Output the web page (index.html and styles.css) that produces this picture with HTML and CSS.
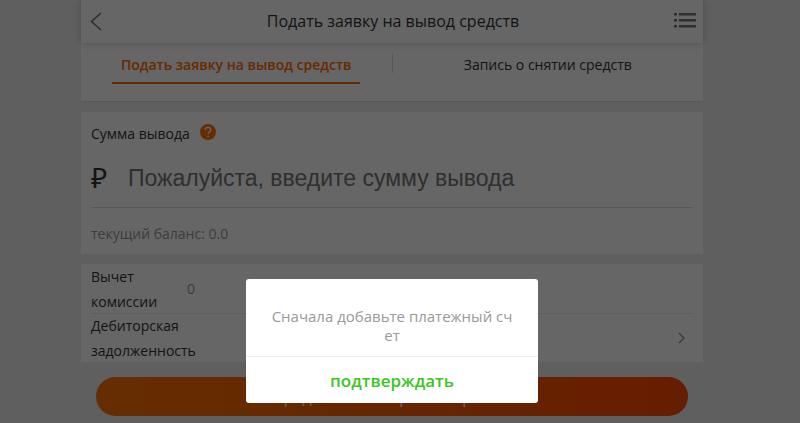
FILE: index.html
```html
<!DOCTYPE html>
<html lang="ru">

<head>
    <meta charset="UTF-8">
    <meta name="viewport" content="width=device-width, initial-scale=1.0">
    <title>Подать заявку на вывод средств</title>
    <link rel="stylesheet" href="styles.css">
</head>

<body>
    <div class="page">
        <header class="header">
            <a href="#" class="back" aria-label="Назад">
                <svg width="12" height="20" viewBox="0 0 12 20" fill="none" stroke="#777" stroke-width="1.6">
                    <path d="M11 2L1.5 10.5L11 19" />
                </svg>
            </a>
            <h1>Подать заявку на вывод средств</h1>
            <button class="menu" aria-label="Меню">
                <svg width="22" height="16" viewBox="0 0 22 16" fill="#777">
                    <path d="M0 0h3v2.6H0zM0 6h3v2.6H0zM0 12h3v2.6H0zM5 0h17v2.6H5zM5 6h17v2.6H5zM5 12h17v2.6H5z" />
                </svg>
            </button>
        </header>

        <nav class="tabs">
            <a href="#" class="tab active"><span>Подать заявку на вывод средств</span></a>
            <a href="#" class="tab"><span>Запись о снятии средств</span></a>
        </nav>

        <section class="card amount">
            <div class="amount-title">
                <label for="amountInput">Сумма вывода</label>
                <svg width="16" height="16" viewBox="0 0 16 16" fill="none">
                    <circle cx="8" cy="8" r="8" fill="#ff7300" />
                    <path d="M5.2 6C5.2 4.2 6.4 3.3 8 3.3s2.8 1 2.8 2.5c0 1.9-2.7 2.1-2.7 4.2" stroke="#fff" stroke-width="1.2" />
                    <circle cx="8.1" cy="12.3" r=".9" fill="#fff" />
                </svg>
            </div>
            <div class="amount-field">
                <span class="currency">₽</span>
                <input type="text" id="amountInput" placeholder="Пожалуйста, введите сумму вывода">
            </div>
            <p class="balance">текущий баланс: 0.0</p>
        </section>

        <section class="card details">
            <div class="row">
                <span class="row-name">Вычет комиссии</span>
                <span class="row-value">0</span>
            </div>
            <a href="#" class="row">
                <span class="row-name">Дебиторская задолженность</span>
                <svg class="arrow" width="7" height="12" viewBox="0 0 7 12" fill="none" stroke="#999" stroke-width="1.5">
                    <path d="M1 1l5 5l-5 5" />
                </svg>
            </a>
        </section>

        <button class="submit">представить на рассмотрение</button>
    </div>

    <div class="overlay">
        <div class="dialog" role="dialog" aria-labelledby="dialogText">
            <p id="dialogText">Сначала добавьте платежный счет</p>
            <button class="confirm">подтверждать</button>
        </div>
    </div>
</body>

</html>
```
FILE: styles.css
```css
* {
    box-sizing: border-box;
}

body {
    margin: 0;
    padding-right: 16px;
    min-height: 100vh;
    background: #eee;
    color: #333;
    font-family: "Open Sans", "Noto Sans", sans-serif;
    font-size: 14px;
}

a {
    color: inherit;
    text-decoration: none;
}

button {
    border: none;
    font-family: inherit;
    cursor: pointer;
}

.page {
    width: 100%;
    max-width: 622px;
    margin: 0 auto;
}

/* Top bar */
.header {
    position: relative;
    z-index: 1;
    display: flex;
    align-items: center;
    justify-content: space-between;
    height: 43px;
    padding: 0 7px 2px 9px;
    background: #fff;
    box-shadow: 0 0 8px rgba(0, 0, 0, 0.2);
}

.header h1 {
    margin: 0;
    font-size: 16px;
    font-weight: normal;
}

.back,
.menu {
    display: flex;
    width: 22px;
    padding: 0;
    background: none;
}

/* Tabs */
.tabs {
    display: flex;
    height: 59px;
    padding-top: 10px;
    background: #fff;
    border-bottom: 1px solid #ddd;
}

.tab {
    flex: 1;
    height: 20px;
    text-align: center;
}

.tab + .tab {
    border-left: 1px solid #ddd;
}

.tab span {
    display: block;
    width: 80%;
    height: 31px;
    margin: 0 auto;
    line-height: 24px;
}

.tab.active span {
    border-bottom: 2px solid #ff6a00;
    color: #ff6a00;
    font-weight: 600;
}

.card {
    margin-top: 10px;
    padding: 0 10px;
    background: #fff;
}

/* Amount */
.amount {
    padding-top: 12px;
}

.amount-title {
    display: flex;
    gap: 10px;
    line-height: 20px;
}

.amount-field {
    display: flex;
    align-items: center;
    height: 64px;
    padding-top: 3px;
    border-bottom: 1px solid #ddd;
}

.currency {
    width: 36px;
    font-size: 28px;
}

.amount-field input {
    flex: 1;
    min-width: 0;
    padding: 2px 0 0 1px;
    border: none;
    outline: none;
    background: none;
    font-family: "Liberation Sans", Arial, sans-serif;
    font-size: 23px;
}

.amount-field input::placeholder {
    color: #757575;
}

.balance {
    margin: 0;
    padding-top: 6px;
    color: #999;
    line-height: 40px;
}

/* Details */
.row {
    display: flex;
    align-items: center;
    height: 49px;
    padding-right: 8px;
    line-height: 25px;
}

.row + .row {
    border-top: 1px solid #eee;
}

.row-name {
    width: 96px;
}

.row-value {
    color: #999;
}

.arrow {
    margin-left: auto;
}

.submit {
    display: block;
    width: calc(100% - 30px);
    height: 39px;
    margin: 15px auto 0;
    border-radius: 20px;
    background: linear-gradient(90deg, #ff7300, #ff4b00);
    color: #fff;
    font-size: 16px;
}

/* Dialog */
.overlay {
    position: fixed;
    inset: 0;
    z-index: 10;
    display: flex;
    justify-content: center;
    align-items: flex-end;
    padding: 0 16px 20px 0;
    background: rgba(0, 0, 0, 0.6);
}

.dialog {
    width: 292px;
    border-radius: 3px;
    background: #fff;
    text-align: center;
}

.dialog p {
    margin: 0;
    padding: 28px 25px 11px;
    color: #999;
    font-size: 15px;
    line-height: 19px;
    word-break: break-all;
}

.confirm {
    width: 100%;
    height: 47px;
    padding: 0;
    border-top: 1px solid #eee;
    background: none;
    color: #3cc51f;
    font-size: 17px;
    font-weight: 600;
}
```
